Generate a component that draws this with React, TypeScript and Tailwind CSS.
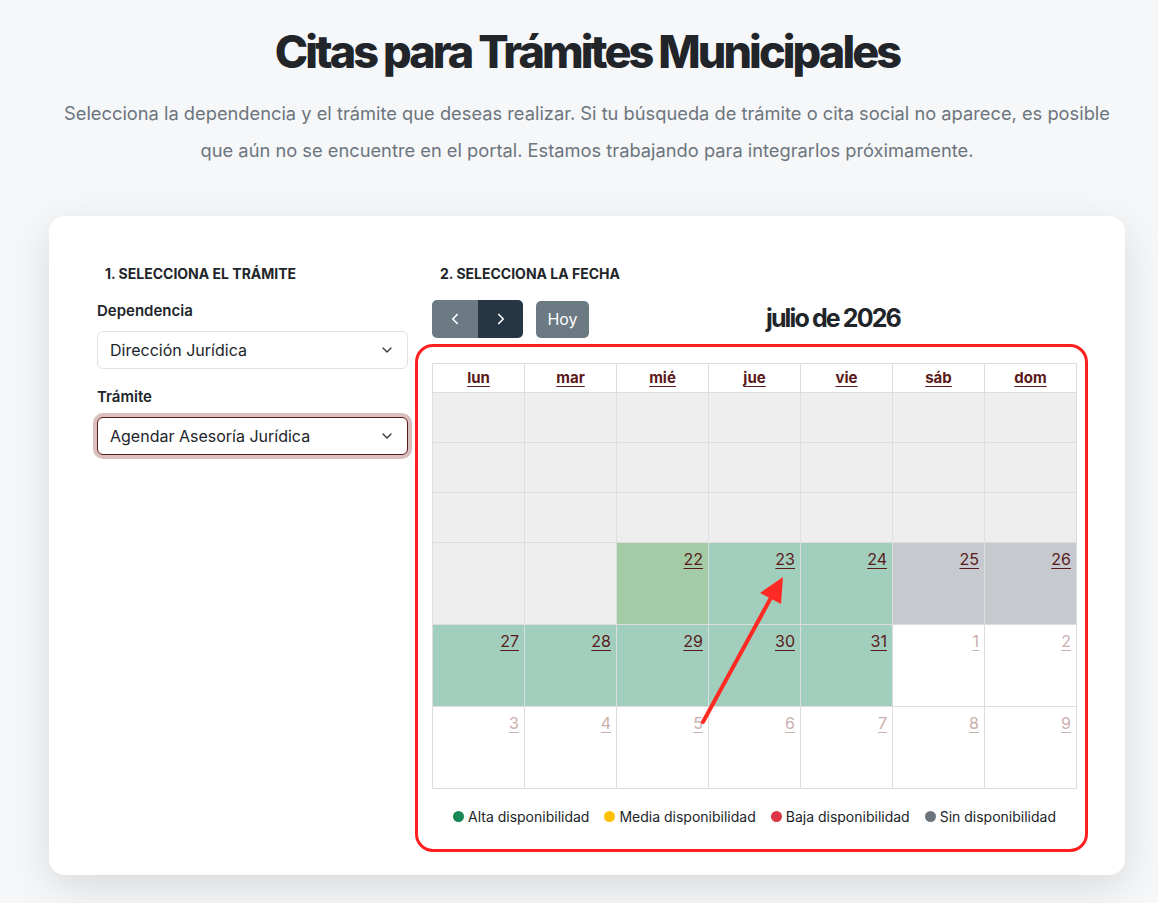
import React from 'react';
import { ChevronDown, ChevronLeft, ChevronRight } from 'lucide-react';

type Cell = { day?: number; bg: string; faded?: boolean };

const PAST = 'bg-[#eeeeee]';
const HIGH = 'bg-[#a2cfbd]';
const HIGH2 = 'bg-[#a3cca6]';
const NONE = 'bg-[#c6c9cd]';
const WHITE = 'bg-white';

const weeks: { h: string; cells: Cell[] }[] = [
  { h: 'h-[50px]', cells: Array.from({ length: 7 }, () => ({ bg: PAST })) },
  { h: 'h-[50px]', cells: Array.from({ length: 7 }, () => ({ bg: PAST })) },
  { h: 'h-[50px]', cells: Array.from({ length: 7 }, () => ({ bg: PAST })) },
  {
    h: 'h-[82px]',
    cells: [
      { bg: PAST },
      { bg: PAST },
      { day: 22, bg: HIGH2 },
      { day: 23, bg: HIGH },
      { day: 24, bg: HIGH },
      { day: 25, bg: NONE },
      { day: 26, bg: NONE },
    ],
  },
  {
    h: 'h-[82px]',
    cells: [
      { day: 27, bg: HIGH },
      { day: 28, bg: HIGH },
      { day: 29, bg: HIGH },
      { day: 30, bg: HIGH },
      { day: 31, bg: HIGH },
      { day: 1, bg: WHITE, faded: true },
      { day: 2, bg: WHITE, faded: true },
    ],
  },
  {
    h: 'h-[82px]',
    cells: [3, 4, 5, 6, 7, 8, 9].map(d => ({ day: d, bg: WHITE, faded: true })),
  },
];

const dayNames = ['lun', 'mar', 'mié', 'jue', 'vie', 'sáb', 'dom'];

const legend = [
  { label: 'Alta disponibilidad', color: 'bg-[#198754]' },
  { label: 'Media disponibilidad', color: 'bg-[#ffc107]' },
  { label: 'Baja disponibilidad', color: 'bg-[#dc3545]' },
  { label: 'Sin disponibilidad', color: 'bg-[#6c757d]' },
];

const SelectBox: React.FC<{ value: string; focused?: boolean }> = ({ value, focused }) => (
  <div
    className={
      focused
        ? 'flex h-[38px] items-center justify-between rounded-[6px] border border-[#5a1a1a] bg-white pl-[12px] pr-[12px] ring-4 ring-[#d9bfc0]'
        : 'flex h-[38px] items-center justify-between rounded-[6px] border border-[#dee2e6] bg-white pl-[12px] pr-[12px]'
    }
  >
    <span className="text-[16px] text-[#212529]">{value}</span>
    <ChevronDown className="h-4 w-4 text-[#343a40]" strokeWidth={2} />
  </div>
);

export default function App() {
  return (
    <div className="min-h-screen bg-[#f6f7f9] pl-[16px] font-['Inter',sans-serif] text-[#212529]">
      <div className="flex flex-col items-center px-4 pt-[22px]">
        <h1 className="text-[45px] font-extrabold leading-[60px] tracking-[-0.065em] text-[#212529]">
          Citas para Trámites Municipales
        </h1>
        <p className="mt-[13px] max-w-[1060px] text-center text-[18.3px] leading-[37px] text-[#6c757d]">
          Selecciona la dependencia y el trámite que deseas realizar. Si tu búsqueda de trámite o cita social no aparece, es posible que aún no se encuentre en el portal. Estamos trabajando para integrarlos próximamente.
        </p>
      </div>

      <div className="mx-auto mt-[47px] w-[1076px] rounded-[16px] bg-white px-[48px] pb-[48px] pt-[48px] shadow-[0_12px_40px_rgba(0,0,0,0.12)]">
        <div className="flex gap-[24px]">
          {/* left column */}
          <div className="w-[311px] shrink-0">
            <h2 className="px-2 text-[14px] font-bold uppercase leading-[20px]">1. Selecciona el trámite</h2>
            <label className="mt-[17px] block text-[15px] font-semibold leading-[20px]">Dependencia</label>
            <div className="mt-[10px]">
              <SelectBox value="Dirección Jurídica" />
            </div>
            <label className="mt-[18px] block text-[15px] font-semibold leading-[20px]">Trámite</label>
            <div className="mt-[10px]">
              <SelectBox value="Agendar Asesoría Jurídica" focused />
            </div>
          </div>

          {/* right column */}
          <div className="relative w-[645px]">
            <h2 className="px-2 text-[14px] font-bold uppercase leading-[20px]">2. Selecciona la fecha</h2>

            <div className="mt-[16px] flex items-center justify-between">
              <div className="flex items-center">
                <div className="flex overflow-hidden rounded-[5px]">
                  <button className="flex h-[38px] w-[46px] items-center justify-center bg-[#6c7a84] text-white">
                    <ChevronLeft className="h-[18px] w-[18px]" strokeWidth={2.2} />
                  </button>
                  <button className="flex h-[38px] w-[45px] items-center justify-center bg-[#263645] text-white">
                    <ChevronRight className="h-[18px] w-[18px]" strokeWidth={2.2} />
                  </button>
                </div>
                <button className="ml-[13px] h-[37px] w-[53px] rounded-[5px] bg-[#6c7a84] text-[16px] text-white">Hoy</button>
              </div>
              <h3 className="text-[25px] font-bold tracking-[-0.075em] text-[#212529]">julio de 2026</h3>
              <div />
            </div>

            <div className="mt-[25px] border-l border-t border-[#dddddd]">
              <div className="grid h-[29px] grid-cols-7">
                {dayNames.map(d => (
                  <div key={d} className="flex items-center justify-center border-b border-r border-[#dddddd] text-[15px] font-bold text-[#5a1a1a] underline underline-offset-[3px]">
                    {d}
                  </div>
                ))}
              </div>
              {weeks.map((w, i) => (
                <div key={i} className={`grid grid-cols-7 ${w.h}`}>
                  {w.cells.map((c, j) => (
                    <div key={j} className={`flex justify-end border-b border-r border-[#dddddd] px-[5px] pt-[5px] ${c.bg}`}>
                      {c.day !== undefined && (
                        <span
                          className={
                            c.faded
                              ? 'text-[16px] leading-[22px] text-[#cbaeae] underline underline-offset-[3px]'
                              : 'text-[16px] leading-[22px] text-[#5a1a1a] underline underline-offset-[3px]'
                          }
                        >
                          {c.day}
                        </span>
                      )}
                    </div>
                  ))}
                </div>
              ))}
            </div>

            <div className="mt-[17px] flex items-center justify-center gap-[15px]">
              {legend.map(l => (
                <div key={l.label} className="flex items-center gap-[4px]">
                  <span className={`h-[11px] w-[11px] rounded-full ${l.color}`} />
                  <span className="text-[14px] text-[#212529]">{l.label}</span>
                </div>
              ))}
            </div>

            {/* red annotation frame */}
            <div className="pointer-events-none absolute left-[-17px] top-[80px] h-[508px] w-[673px] rounded-[18px] border-[3px] border-[#ff1f1f]" />
            {/* red annotation arrow */}
            <svg className="pointer-events-none absolute left-0 top-0" width="645" height="640" viewBox="0 0 645 640">
              <line x1="271" y1="458" x2="341" y2="330" stroke="#ff2a24" strokeWidth="4" strokeLinecap="round" />
              <polygon points="351,313 328,329 349,340" fill="#ff2a24" />
            </svg>
          </div>
        </div>
      </div>
      <div className="h-[30px]" />
    </div>
  );
}
